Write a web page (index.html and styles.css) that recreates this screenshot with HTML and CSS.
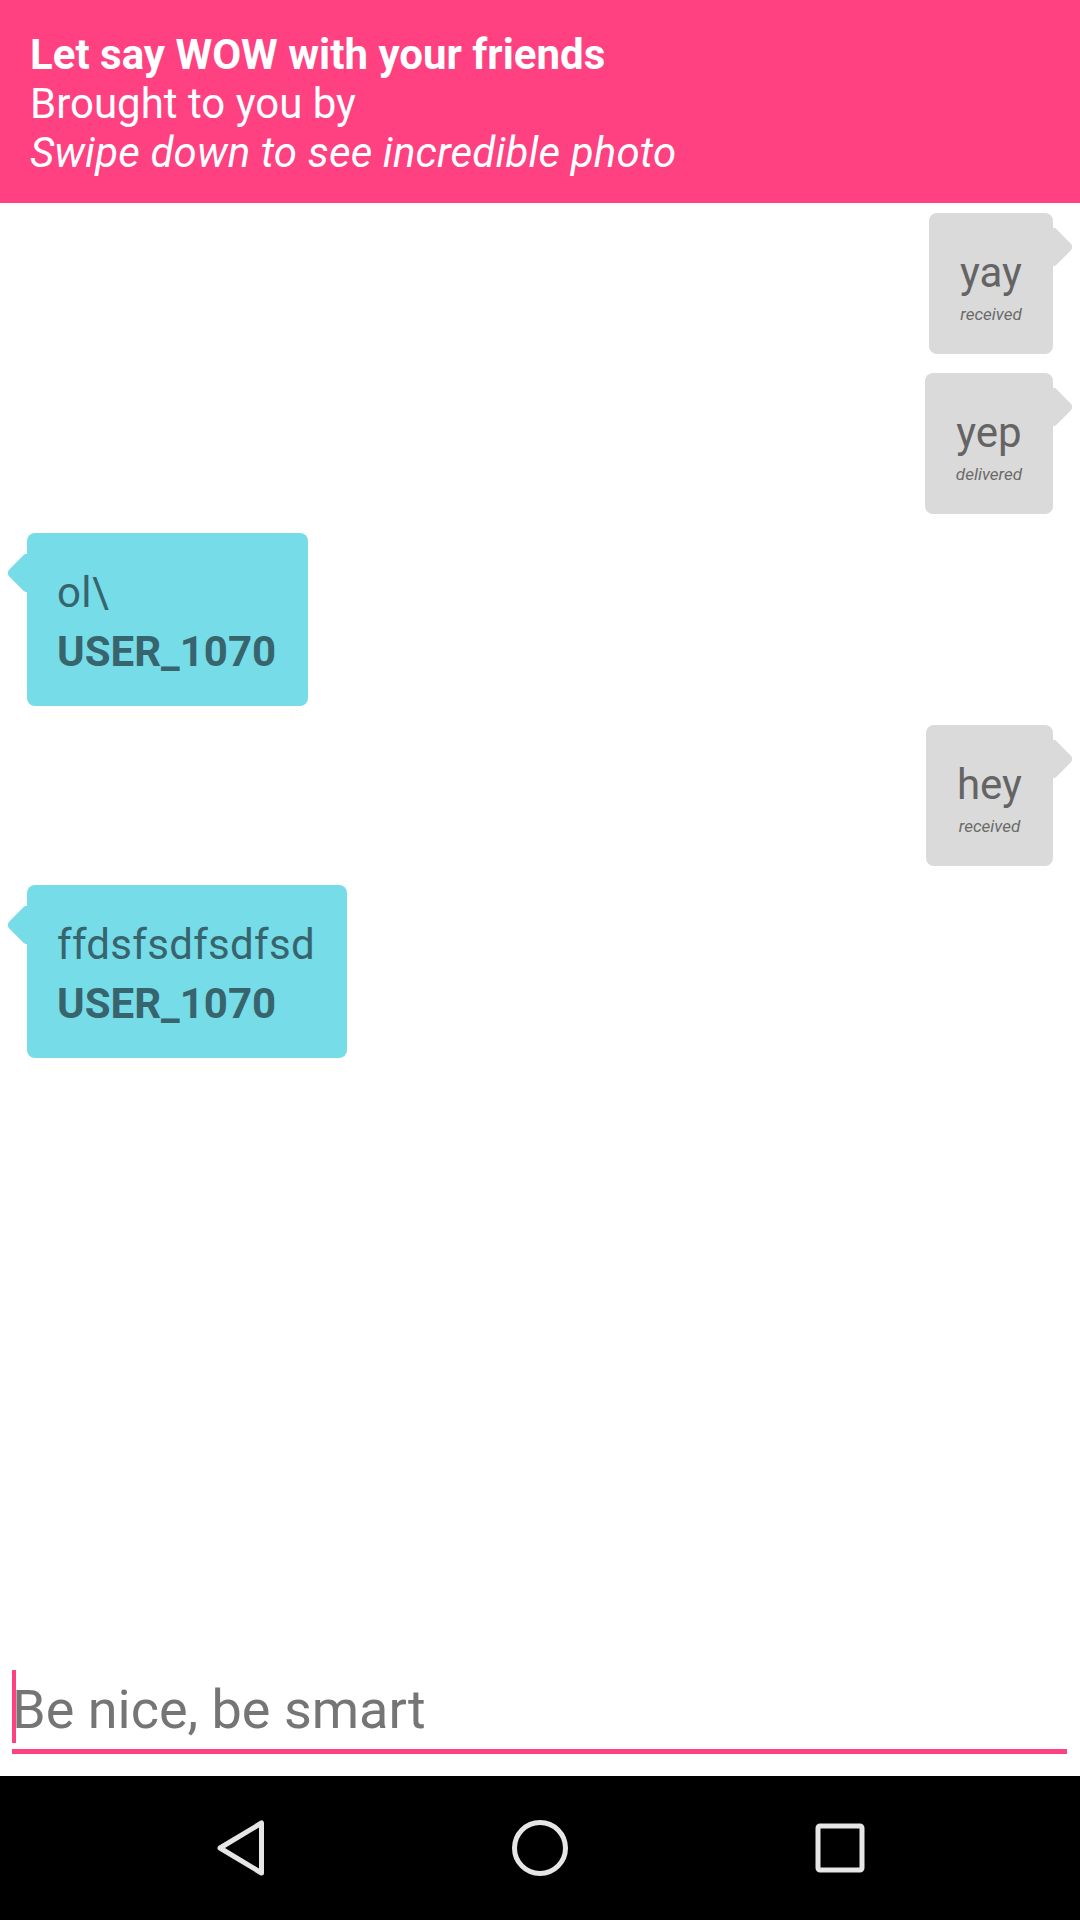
FILE: index.html
```html
<!DOCTYPE html>
<html lang="en">
<head>
<meta charset="utf-8">
<title>Chat</title>
<link rel="stylesheet" href="styles.css">
</head>
<body>
<div class="screen">
  <header class="banner">
    <div class="banner-title">Let say WOW with your friends</div>
    <div class="banner-line">Brought to you by</div>
    <div class="banner-hint">Swipe down to see incredible photo</div>
  </header>

  <main class="chat">
    <div class="row row-out">
      <div class="bubble bubble-out">
        <div class="msg-text">yay</div>
        <div class="msg-status">received</div>
      </div>
    </div>
    <div class="row row-out">
      <div class="bubble bubble-out">
        <div class="msg-text">yep</div>
        <div class="msg-status">delivered</div>
      </div>
    </div>
    <div class="row row-in">
      <div class="bubble bubble-in">
        <div class="msg-text">ol\</div>
        <div class="msg-user">USER_1070</div>
      </div>
    </div>
    <div class="row row-out">
      <div class="bubble bubble-out">
        <div class="msg-text">hey</div>
        <div class="msg-status">received</div>
      </div>
    </div>
    <div class="row row-in">
      <div class="bubble bubble-in">
        <div class="msg-text">ffdsfsdfsdfsd</div>
        <div class="msg-user">USER_1070</div>
      </div>
    </div>
  </main>

  <div class="composer">
    <div class="field">
      <span class="cursor"></span>
      <span class="placeholder">Be nice, be smart</span>
    </div>
  </div>

  <nav class="navbar">
    <svg class="nav-icon" viewBox="0 0 60 60" width="60" height="60">
      <polygon points="10,30 51.5,5 51.5,55" />
    </svg>
    <svg class="nav-icon" viewBox="0 0 60 60" width="60" height="60">
      <circle cx="30" cy="30" r="25.5" />
    </svg>
    <svg class="nav-icon" viewBox="0 0 60 60" width="60" height="60">
      <rect x="8" y="8" width="44" height="44" rx="2" />
    </svg>
  </nav>
</div>
</body>
</html>
```

FILE: styles.css
```css
html, body {
  margin: 0;
  padding: 0;
  background: #ffffff;
}

.screen {
  width: 1080px;
  height: 1920px;
  display: flex;
  flex-direction: column;
  font-family: Roboto, "Noto Sans", "Liberation Sans", sans-serif;
  overflow: hidden;
}

/* Header banner */
.banner {
  background: #ff4081;
  color: #ffffff;
  padding: 30px 30px 26px;
  font-size: 42px;
  line-height: 49px;
}

.banner-title {
  font-weight: 700;
}

.banner-hint {
  font-style: italic;
  letter-spacing: 0.15px;
}

/* Chat list */
.chat {
  flex: 1;
  display: flex;
  flex-direction: column;
  gap: 19px;
  padding-top: 10px;
}

.row {
  display: flex;
}

.row-out {
  justify-content: flex-end;
  padding-right: 27px;
}

.row-in {
  justify-content: flex-start;
  padding-left: 27px;
}

.bubble {
  position: relative;
  border-radius: 8px;
  padding: 35px 31px 30px;
}

.bubble::after {
  content: "";
  position: absolute;
  width: 30px;
  height: 30px;
  border-radius: 5px;
  transform: rotate(45deg);
}

.bubble-out {
  background: #dadada;
  color: #646464;
  text-align: center;
}

.bubble-out::after {
  background: #dadada;
  right: -15px;
  top: 19px;
}

.bubble-in {
  background: #76dce8;
  color: #37646d;
  padding-left: 30px;
  padding-right: 32px;
}

.bubble-in::after {
  background: #76dce8;
  left: -15px;
  top: 25px;
}

.msg-text {
  position: relative;
  z-index: 1;
  font-size: 42px;
  line-height: 49px;
}

.bubble-in .msg-text {
  letter-spacing: 0.3px;
}

.msg-status {
  position: relative;
  z-index: 1;
  font-size: 17px;
  line-height: 20px;
  font-style: italic;
  margin-top: 7px;
  color: #6a6a6a;
}

.msg-user {
  position: relative;
  z-index: 1;
  font-size: 42px;
  line-height: 49px;
  font-weight: 700;
  margin-top: 10px;
}

/* Composer */
.composer {
  padding: 0 13px 22px 12px;
}

.field {
  position: relative;
  height: 73px;
  padding-bottom: 6px;
  border-bottom: 5px solid #ff4081;
}

.cursor {
  position: absolute;
  left: 0;
  top: 0;
  width: 4px;
  height: 73px;
  background: #ff4081;
}

.placeholder {
  display: block;
  padding-top: 8px;
  font-size: 54px;
  line-height: 63px;
  color: #757575;
}

/* Navigation bar */
.navbar {
  height: 144px;
  background: #000000;
  display: flex;
  justify-content: center;
  align-items: center;
  gap: 240px;
}

.nav-icon {
  display: block;
  fill: none;
  stroke: #e6e6e6;
  stroke-width: 5;
  stroke-linejoin: round;
}
```
